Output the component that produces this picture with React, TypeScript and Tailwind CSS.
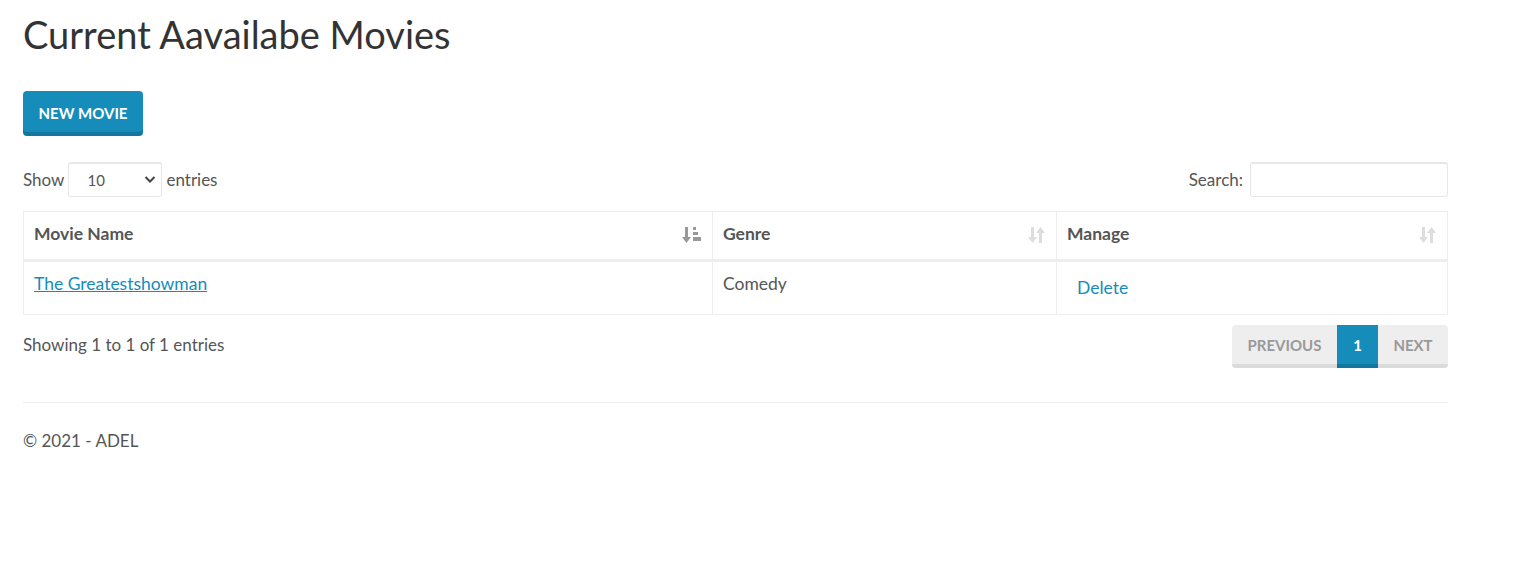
import React from "react";

const SortBoth = () => (
  <svg width="18" height="20" viewBox="0 0 18 20" className="text-[#dddddd]" fill="currentColor">
    <rect x="3" y="2" width="3" height="11" />
    <polygon points="0,12 9,12 4.5,18" />
    <rect x="11" y="7" width="3" height="11" />
    <polygon points="8,8 17,8 12.5,2" />
  </svg>
);

const SortAsc = () => (
  <svg width="20" height="20" viewBox="0 0 20 20" className="text-[#999999]" fill="currentColor">
    <rect x="3" y="2" width="3" height="11" />
    <polygon points="0,12 9,12 4.5,18" />
    <rect x="11" y="2" width="3" height="3" />
    <rect x="11" y="7" width="5" height="3" />
    <rect x="11" y="12" width="8" height="4" />
  </svg>
);

export default function App() {
  return (
    <div className="min-h-[583px] bg-white text-[#555555]" style={{ fontFamily: "Lato, 'Liberation Sans', sans-serif" }}>
      <div className="ml-[23px] w-[1425px] pt-[11px]">
        <h1 className="text-[38px] leading-[46px] text-[#333333] font-normal">Current Aavailabe Movies</h1>
        <div className="mt-[34px]">
          <button className="h-[45px] w-[120px] rounded-[4px] bg-[#158cba] text-white text-[15px] font-bold uppercase shadow-[inset_0_-4px_0_rgba(0,0,0,0.15)]">
            New Movie
          </button>
        </div>
        <div className="mt-[26px] flex items-center justify-between">
          <div className="flex items-center text-[17px]">
            <span>Show</span>
            <div className="relative ml-[4px] mr-[4px] flex h-[35px] w-[94px] items-center rounded-[3px] border border-[#e7e7e7] border-t-2 pl-[18px] text-[15px] text-[#555555]">
              10
              <svg className="absolute right-[5px] top-[11px]" width="12" height="9" viewBox="0 0 12 9" fill="none" stroke="#444" strokeWidth="2">
                <polyline points="1.5,2 6,6.5 10.5,2" />
              </svg>
            </div>
            <span>entries</span>
          </div>
          <div className="flex items-center text-[17px]">
            <span className="mr-[7px]">Search:</span>
            <div className="h-[35px] w-[198px] rounded-[3px] border border-[#e7e7e7] border-t-2" />
          </div>
        </div>
        <table className="mt-[14px] w-full border-collapse text-[17px]">
          <thead>
            <tr className="h-[49px] border-b-[3px] border-[#eeeeee]">
              <th className="w-[689px] border border-[#eeeeee] px-[10px] pb-[2px] text-left text-[17.5px] font-bold text-[#555555]">
                <div className="flex items-center justify-between">
                  <span>Movie Name</span>
                  <SortAsc />
                </div>
              </th>
              <th className="w-[344px] border border-[#eeeeee] px-[10px] pb-[2px] text-left text-[17.5px] font-bold">
                <div className="flex items-center justify-between">
                  <span>Genre</span>
                  <SortBoth />
                </div>
              </th>
              <th className="border border-[#eeeeee] px-[10px] pb-[2px] text-left text-[17.5px] font-bold">
                <div className="flex items-center justify-between">
                  <span>Manage</span>
                  <SortBoth />
                </div>
              </th>
            </tr>
          </thead>
          <tbody>
            <tr className="h-[54px]">
              <td className="border border-[#eeeeee] px-[10px] align-top pt-[9px] text-[17.5px]">
                <a href="#" className="text-[#158cba] underline">The Greatestshowman</a>
              </td>
              <td className="border border-[#eeeeee] px-[10px] align-top pt-[9px] text-[17.5px]">Comedy</td>
              <td className="border border-[#eeeeee] px-[10px] align-top pt-[13px] text-[17.5px]">
                <a href="#" className="ml-[10px] text-[#158cba]">Delete</a>
              </td>
            </tr>
          </tbody>
        </table>
        <div className="mt-[10px] flex items-start justify-between">
          <div className="pt-[7px] text-[17px]">Showing 1 to 1 of 1 entries</div>
          <div className="flex h-[43px] overflow-hidden rounded-[4px] text-[15px] font-bold uppercase">
            <div className="flex w-[105px] items-center justify-center bg-[#eeeeee] pb-[3px] text-[#999999] shadow-[inset_0_-4px_0_rgba(0,0,0,0.08)]">Previous</div>
            <div className="flex w-[41px] items-center justify-center bg-[#158cba] pb-[3px] text-white shadow-[inset_0_-4px_0_rgba(0,0,0,0.15)]">1</div>
            <div className="flex w-[70px] items-center justify-center bg-[#eeeeee] pb-[3px] text-[#999999] shadow-[inset_0_-4px_0_rgba(0,0,0,0.08)]">Next</div>
          </div>
        </div>
        <hr className="mt-[34px] border-t border-[#eeeeee]" />
        <footer className="mt-[25px] text-[17px]">© 2021 - ADEL</footer>
      </div>
    </div>
  );
}
